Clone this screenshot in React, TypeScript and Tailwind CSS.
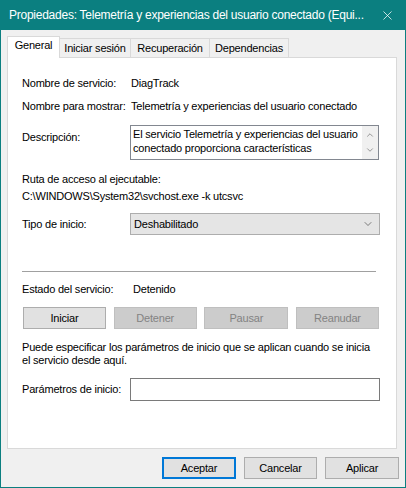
import { X, ChevronUp, ChevronDown } from 'lucide-react'

const font = { fontFamily: '"Liberation Sans", Arial, sans-serif' }

function Btn({ label, disabled, primary, className = '' }: { label: string; disabled?: boolean; primary?: boolean; className?: string }) {
  // Windows classic push button
  const base = 'h-[22px] flex items-center justify-center text-[11px] leading-[13px] tracking-[-0.2px]'
  if (disabled) {
    return <div className={`${base} bg-[#cccccc] border border-[#bfbfbf] text-[#838383] ${className}`}>{label}</div>
  }
  if (primary) {
    return <div className={`${base} bg-[#e1e1e1] border-2 border-[#0078d7] text-black ${className}`}>{label}</div>
  }
  return <div className={`${base} bg-[#e1e1e1] border border-[#adadad] text-black ${className}`}>{label}</div>
}

export default function App() {
  const tabs = [
    { name: 'Iniciar sesión', w: 'w-[71px]' },
    { name: 'Recuperación', w: 'w-[79px]' },
    { name: 'Dependencias', w: 'w-[79px]' },
  ]

  return (
    <div className="w-[406px] h-[488px] bg-[#0b7f80] flex flex-col px-px pb-px text-black select-none" style={font}>
      {/* Title bar */}
      <div className="h-[30px] flex items-center justify-between pl-[8px] pr-[10px] text-white">
        <span className="text-[12px] tracking-[-0.25px] whitespace-nowrap">Propiedades: Telemetría y experiencias del usuario conectado (Equi...</span>
        <X size={15} strokeWidth={1.2} className="text-white shrink-0" />
      </div>

      <div className="flex-1 bg-[#f0f0f0] flex flex-col">
        {/* Tabs */}
        <div className="flex items-end h-[21px] ml-[6px] mt-[6px] text-[11px] leading-[13px] tracking-[-0.2px]">
          <div className="relative z-10 -mb-px w-[53px] h-[22px] bg-white border border-b-0 border-[#d9d9d9] flex justify-center pt-[2px]">
            General
          </div>
          {tabs.map(t => (
            <div key={t.name} className={`${t.w} h-[19px] bg-[#f0f0f0] border-t border-r border-[#d9d9d9] flex justify-center items-center whitespace-nowrap`}>
              {t.name}
            </div>
          ))}
        </div>

        {/* Panel */}
        <div className="ml-[6px] w-[390px] h-[392px] bg-white border border-[#d9d9d9] pl-[14px] pt-[19px] text-[11px] leading-[13px] tracking-[-0.2px]">
          <div className="flex">
            <div className="w-[108px]">Nombre de servicio:</div>
            <div className="pl-[1px]">DiagTrack</div>
          </div>
          <div className="flex mt-[10px]">
            <div className="w-[108px] whitespace-nowrap">Nombre para mostrar:</div>
            <div className="pl-[1px] whitespace-nowrap">Telemetría y experiencias del usuario conectado</div>
          </div>
          <div className="flex mt-[12px]">
            <div className="w-[108px] pt-[6px]">Descripción:</div>
            <div className="w-[249px] h-[35px] border border-[#828790] flex">
              <div className="flex-1 pl-[2px] pt-[1px] leading-[14px]">
                El servicio Telemetría y experiencias del usuario conectado proporciona características
              </div>
              <div className="w-[16px] bg-[#f0f0f0] flex flex-col items-center justify-between py-[4px] text-[#606060]">
                <ChevronUp size={10} strokeWidth={1.5} />
                <ChevronDown size={10} strokeWidth={1.5} />
              </div>
            </div>
          </div>
          <div className="mt-[13px]">Ruta de acceso al ejecutable:</div>
          <div className="mt-[4px]">C:\WINDOWS\System32\svchost.exe -k utcsvc</div>
          <div className="flex items-center mt-[10px]">
            <div className="w-[108px]">Tipo de inicio:</div>
            <div className="w-[250px] h-[22px] bg-[#e5e5e5] border border-[#adadad] flex items-center justify-between pl-[3px] pr-[5px]">
              <span>Deshabilitado</span>
              <ChevronDown size={12} strokeWidth={1.3} className="text-[#404040]" />
            </div>
          </div>
          <div className="mt-[36px] w-[354px] h-px bg-[#a0a0a0]" />
          <div className="flex mt-[11px]">
            <div className="w-[111px]">Estado del servicio:</div>
            <div>Detenido</div>
          </div>
          <div className="flex justify-between w-[356px] mt-[11px] ml-[1px]">
            <Btn label="Iniciar" className="w-[83px]" />
            <Btn label="Detener" disabled className="w-[83px]" />
            <Btn label="Pausar" disabled className="w-[84px]" />
            <Btn label="Reanudar" disabled className="w-[83px]" />
          </div>
          <div className="mt-[12px] w-[352px]">
            Puede especificar los parámetros de inicio que se aplican cuando se inicia el servicio desde aquí.
          </div>
          <div className="flex items-center mt-[11px]">
            <div className="w-[108px]">Parámetros de inicio:</div>
            <div className="w-[250px] h-[23px] bg-white border border-[#7a7a7a]" />
          </div>
        </div>

        {/* Dialog buttons */}
        <div className="flex justify-end gap-[8px] mt-[8px] mr-[6px]">
          <Btn label="Aceptar" primary className="w-[74px]" />
          <Btn label="Cancelar" className="w-[73px]" />
          <Btn label="Aplicar" className="w-[74px]" />
        </div>
      </div>
    </div>
  )
}
